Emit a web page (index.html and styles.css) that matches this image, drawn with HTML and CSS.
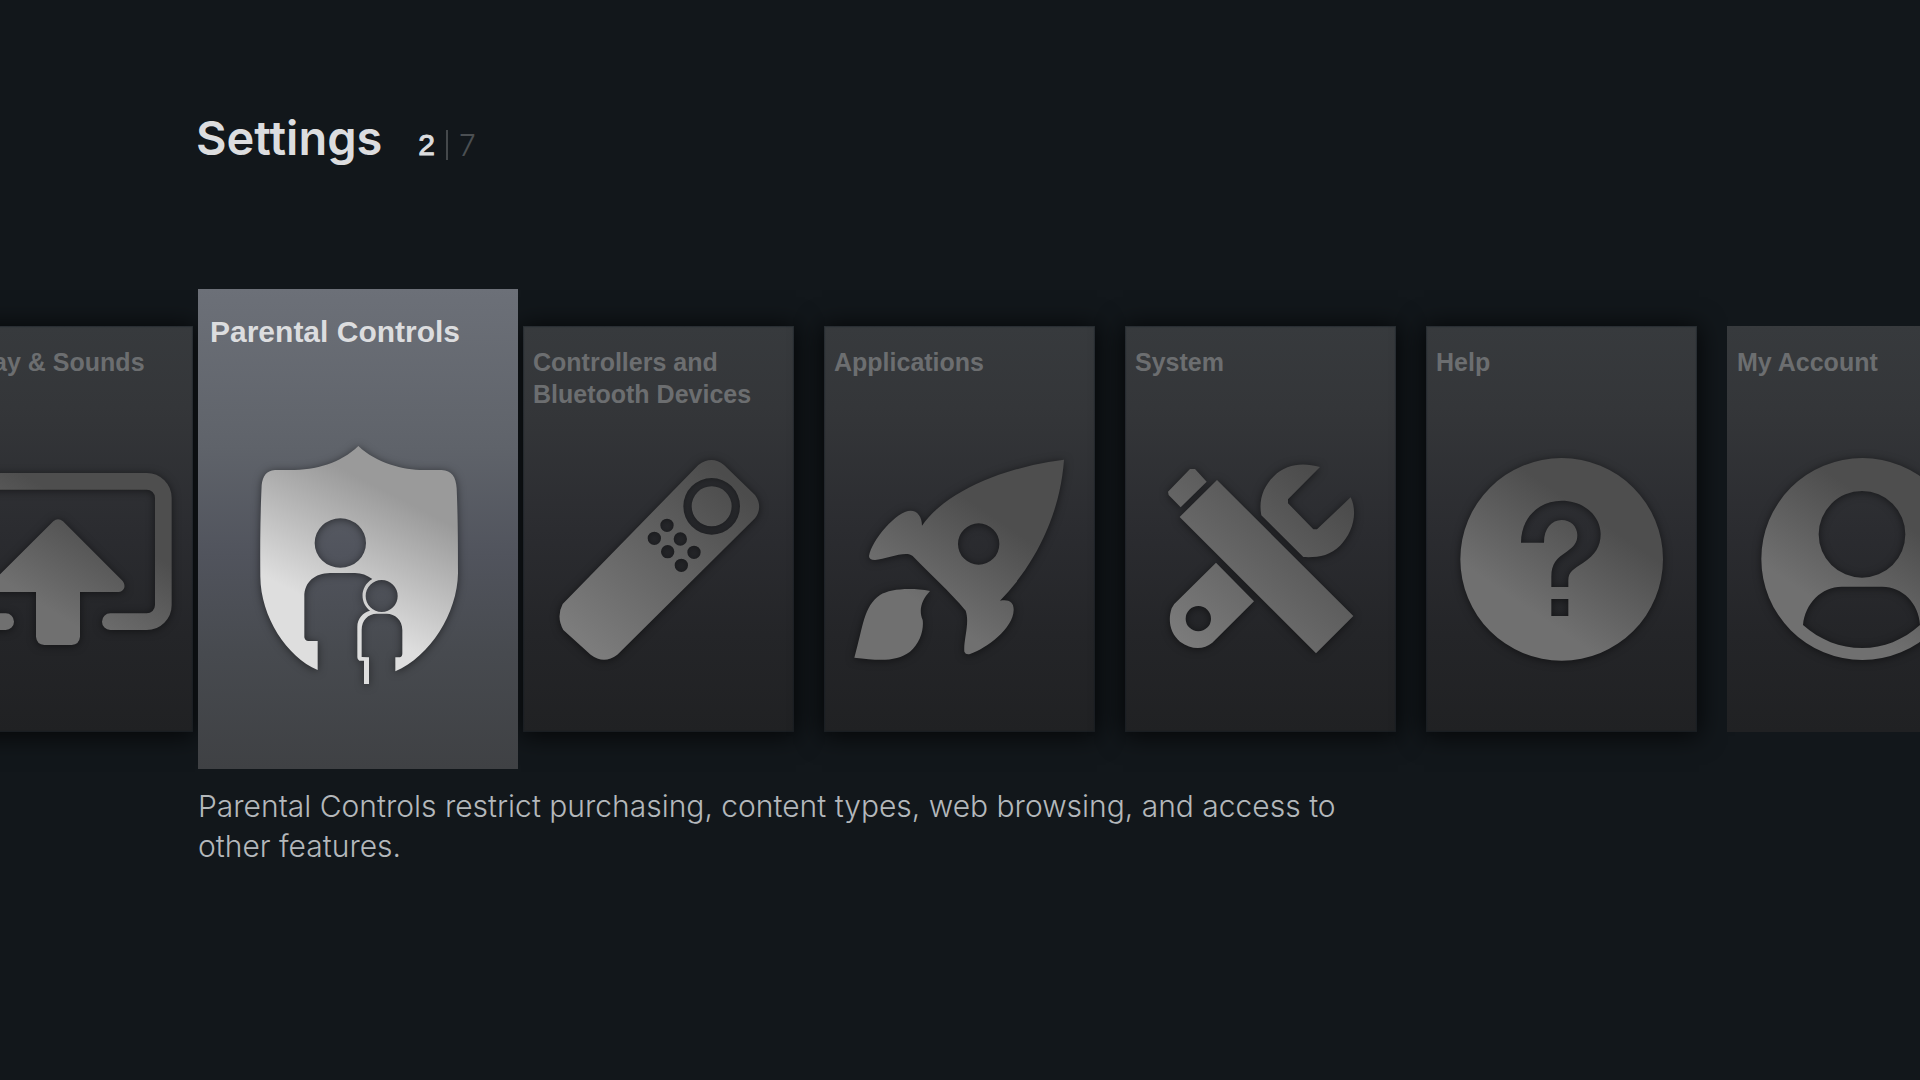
FILE: index.html
```html
<!DOCTYPE html>
<html lang="en">
<head>
<meta charset="utf-8">
<title>Settings</title>
<link rel="stylesheet" href="styles.css">
</head>
<body>
<svg class="defs" width="0" height="0" aria-hidden="true">
  <defs>
    <linearGradient id="metal" gradientUnits="userSpaceOnUse" x1="390" y1="930" x2="580" y2="650">
      <stop offset="0" stop-color="#707070"/><stop offset="1" stop-color="#4e4e4e"/>
    </linearGradient>
    <linearGradient id="metal-display" gradientUnits="userSpaceOnUse" x1="100" y1="960" x2="260" y2="700">
      <stop offset="0" stop-color="#707070"/><stop offset="1" stop-color="#4e4e4e"/>
    </linearGradient>
    <linearGradient id="metal-soft" gradientUnits="userSpaceOnUse" x1="240" y1="1040" x2="680" y2="560">
      <stop offset="0" stop-color="#7c7c7c"/><stop offset="1" stop-color="#4c4c4c"/>
    </linearGradient>
    <linearGradient id="metal-bright" gradientUnits="userSpaceOnUse" x1="400" y1="980" x2="580" y2="630">
      <stop offset="0" stop-color="#dedede"/><stop offset="1" stop-color="#9a9a9a"/>
    </linearGradient>
  </defs>
</svg>

<main class="page">
  <header class="header">
    <h1 class="heading">Settings</h1>
    <p class="counter"><span class="current">2</span><span class="divider"></span><span class="total">7</span></p>
  </header>

  <nav class="carousel" aria-label="Settings sections">
    <a class="card" href="#display">
      <span class="title">Display &amp; Sounds</span>
      <svg class="icon" viewBox="-234 138 813 1218" aria-hidden="true">
        <path fill="none" stroke="url(#metal-display)" stroke-width="50" stroke-linecap="round" d="M331 1025H440A50 50 0 0 0 490 975V654A50 50 0 0 0 440 604H-92A50 50 0 0 0 -142 654V975A50 50 0 0 0 -92 1025H17"/>
        <path fill="url(#metal-display)" d="M160 724Q174 712 189 724L368 903C380 920 371 935 355 936H240V1070Q238 1093 215 1095H133Q110 1093 108 1070V936H-7C-23 935-32 920-20 903Z"/>
      </svg>
    </a>

    <a class="card focused" href="#parental" aria-current="true">
      <span class="title">Parental Controls</span>
      <svg class="icon" viewBox="24 27 960 1440" aria-hidden="true">
        <path fill="url(#metal-bright)" fill-rule="evenodd" d="M505 498C560 550 640 570 700 570H755C785 572 798 590 800 625C804 720 804 800 804 880C802 1000 720 1130 616 1174V1132H630Q637 1130 637 1120V1050C637 1020 615 1001 590 1001H560C535 1001 515 1020 515 1050V1131L537 1132V1212H522V1142H508Q502 1140 502 1132V1040C502 1015 520 997 540 992C510 970 508 920 547 897C530 885 515 879 495 879H420C375 880 343 905 343 950V1072Q345 1083 355 1083H383V1170C290 1130 212 1010 211 890C210 800 211 700 215 615C218 590 228 572 255 570H300C380 570 450 550 505 498ZM374 789a77 74 0 1 0 154 0a77 74 0 1 0-154 0ZM527 948a48 48 0 1 0 96 0a48 48 0 1 0-96 0Z"/>
      </svg>
    </a>

    <a class="card" href="#controllers">
      <span class="title">Controllers and Bluetooth Devices</span>
      <svg class="icon" viewBox="39 78 813 1218" aria-hidden="true">
        <path fill="url(#metal-soft)" fill-rule="evenodd" d="M565 495Q605 465 642 495L735 585Q760 620 735 655L322 1064Q282 1094 242 1064L160 990Q138 950 158 912ZM520 619a85 85 0 1 0 170 0a85 85 0 1 0-170 0ZM545 619a60 60 0 1 0 120 0a60 60 0 1 0-120 0ZM451 676a20 20 0 1 0 40 0a20 20 0 1 0-40 0ZM413 715a20 20 0 1 0 40 0a20 20 0 1 0-40 0ZM491 717a20 20 0 1 0 40 0a20 20 0 1 0-40 0ZM453 755a20 20 0 1 0 40 0a20 20 0 1 0-40 0ZM532 757a20 20 0 1 0 40 0a20 20 0 1 0-40 0ZM494 796a20 20 0 1 0 40 0a20 20 0 1 0-40 0Z"/>
      </svg>
    </a>

    <a class="card" href="#applications">
      <span class="title">Applications</span>
      <svg class="icon" viewBox="72 78 813 1218" aria-hidden="true">
        <path fill="url(#metal)" fill-rule="evenodd" d="M792 479C620 500 440 570 366 677C366 650 352 632 332 632C290 632 215 720 207 768Q207 780 225 780C260 776 320 750 338 768C390 822 450 875 497 932C510 970 490 1020 493 1055Q497 1065 510 1062C560 1045 640 985 641 930C642 905 625 897 600 902C700 800 780 650 792 479ZM474 732a62 62 0 1 0 124 0a62 62 0 1 0-124 0ZM390 873C330 862 270 867 240 885C190 920 190 980 163 1073C240 1082 290 1085 330 1055C360 1030 372 990 368 960C355 930 365 900 390 873Z"/>
      </svg>
    </a>

    <a class="card" href="#system">
      <span class="title">System</span>
      <svg class="icon" viewBox="75 78 813 1218" aria-hidden="true">
        <path fill="url(#metal-soft)" fill-rule="evenodd" d="M270 507H285L320 545L242 622L206 585L204 575ZM351 540L760 948L648 1060L239 651ZM660 501L564 598V610L640 688H651L752 592C775 640 757 700 720 737C690 768 650 773 610 771L484 646C475 600 490 560 520 530C560 490 610 488 660 501ZM348 788L462 904L337 1028C310 1050 275 1050 240 1025C210 1000 203 960 215 925Q220 912 235 900ZM257 956a38 38 0 1 0 76 0a38 38 0 1 0-76 0Z"/>
      </svg>
    </a>

    <a class="card" href="#help">
      <span class="title">Help</span>
      <svg class="icon" viewBox="78 78 813 1218" aria-hidden="true">
        <path fill="url(#metal)" fill-rule="evenodd" d="M181 778a304 304 0 1 0 608 0a304 304 0 1 0-608 0ZM363 728C363 655 415 602 485 602C555 602 602 650 602 702C602 740 585 765 550 788C520 808 505 815 505 840V861H454V830C454 790 470 775 500 755C522 740 532 728 532 705C532 680 512 660 485 660C455 660 432 685 432 728ZM454 897H505V948H454Z"/>
      </svg>
    </a>

    <a class="card flat" href="#account">
      <span class="title">My Account</span>
      <svg class="icon" viewBox="81 78 813 1218" aria-hidden="true">
        <path fill="url(#metal)" fill-rule="evenodd" d="M184 777a303 303 0 1 0 606 0a303 303 0 1 0-606 0ZM356 703a130 130 0 1 0 260 0a130 130 0 1 0-260 0ZM309 975C315 910 365 860 425 860H547C607 860 657 910 660 975C610 1020 550 1044 487 1044C420 1044 360 1020 309 975Z"/>
      </svg>
    </a>
  </nav>

  <p class="description">Parental Controls restrict purchasing, content types, web browsing, and access to other features.</p>
</main>
</body>
</html>
```
FILE: styles.css
```css
* {
  box-sizing: border-box;
}

body {
  margin: 0;
  min-height: 100vh;
  background: #12171b;
  color: #dcdddf;
  font-family: "Liberation Sans", Arial, sans-serif;
  overflow-x: hidden;
}

.defs {
  display: block;
}

.page {
  padding-top: 108px;
}

.header {
  display: flex;
  align-items: baseline;
  gap: 36px;
  padding-left: 196px;
}

.heading,
.counter,
.description {
  margin: 0;
}

.heading {
  font-family: Inter, "Liberation Sans", sans-serif;
  font-size: 47px;
  font-weight: 600;
  line-height: 60px;
}

.counter {
  display: flex;
  align-items: center;
  gap: 11px;
  font-size: 30px;
  line-height: 36px;
}

.current {
  -webkit-text-stroke: 1px currentColor;
}

.divider {
  width: 2px;
  height: 30px;
  background: #45494c;
}

.total {
  color: #4b4f52;
  font-family: Inter, sans-serif;
  font-weight: 300;
}

.carousel {
  display: flex;
  align-items: center;
  gap: 30px;
  margin-top: 121px;
  margin-left: -78px;
}

.card {
  display: grid;
  flex: none;
  width: 271px;
  height: 406px;
  background: linear-gradient(#373a3d, #343639 20%, #2b2c30 50%, #242528 76%, #202123);
  box-shadow: 0 2px 24px 2px rgba(0, 0, 0, 0.75), inset 0 0 1px 1px rgba(18, 28, 34, 0.4);
  color: #6c6e70;
  font-size: 25px;
  font-weight: 700;
  line-height: 32px;
  text-decoration: none;
}

.title,
.icon {
  grid-area: 1 / 1;
}

.title {
  padding: 20px 10px;
}

.icon {
  width: 100%;
  height: 100%;
  filter: drop-shadow(0 1px 4px rgba(0, 0, 0, 0.5));
}

.flat {
  box-shadow: none;
}

.focused {
  position: relative;
  z-index: 1;
  width: 320px;
  height: 480px;
  margin: 0 -25px;
  background: linear-gradient(#6c7078, #5f636a 33%, #51545d 55%, #474a4f 76%, #3f4144);
  box-shadow: none;
  color: #dcdddf;
  font-size: 30px;
  line-height: 38px;
}

.focused .title {
  padding: 24px 12px;
}

.description {
  max-width: 1360px;
  padding: 17px 0 0 198px;
  color: #b4b8bb;
  font-family: Inter, sans-serif;
  font-size: 30px;
  font-weight: 300;
  line-height: 40px;
}
```
